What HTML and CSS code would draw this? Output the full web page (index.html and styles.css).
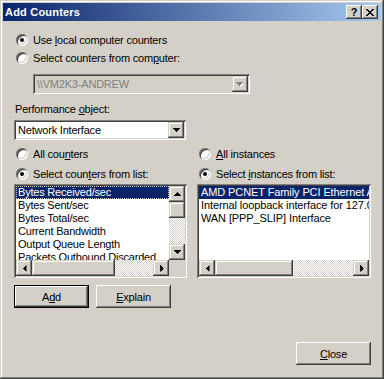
FILE: index.html
```html
<!DOCTYPE html>
<html>
<head>
    <meta charset="UTF-8">
    <title>Add Counters</title>
    <link rel="stylesheet" href="styles.css">
</head>
<body>
<div class="window">
    <div class="titleBar">
        <span class="title">Add Counters</span>
        <div class="capBtns">
            <span class="capBtn">?</span>
            <span class="capBtn"><svg width="8" height="7" viewBox="0 0 8 7" shape-rendering="crispEdges"><path d="M0 0h2v1h-2z M6 0h2v1h-2z M1 1h2v1h-2z M5 1h2v1h-2z M2 2h4v1h-4z M3 3h2v1h-2z M2 4h4v1h-4z M1 5h2v1h-2z M5 5h2v1h-2z M0 6h2v1h-2z M6 6h2v1h-2z" fill="#000"/></svg></span>
        </div>
    </div>

    <div class="content">
        <div class="radioRow"><span class="radio checked"></span><span>Use <u>l</u>ocal computer counters</span></div>
        <div class="radioRow"><span class="radio"></span><span>Select counters from com<u>p</u>uter:</span></div>
        <div class="combo disabled machine">
            <span class="comboText">\\VM2K3-ANDREW</span>
            <span class="dropBtn"><svg width="8" height="5" viewBox="0 0 8 5" shape-rendering="crispEdges"><path d="M1 1h7v1h-1v1h-1v1h-1v1h-1v-1h-1v-1h-1v-1h-1z" fill="#fff"/><path d="M0 0h7v1h-1v1h-1v1h-1v1h-1v-1h-1v-1h-1v-1h-1z" fill="#808080"/></svg></span>
        </div>

        <div class="label">Performance <u>o</u>bject:</div>
        <div class="combo object">
            <span class="comboText">Network Interface</span>
            <span class="dropBtn"><svg width="7" height="4" viewBox="0 0 7 4" shape-rendering="crispEdges"><path d="M0 0h7v1h-1v1h-1v1h-1v1h-1v-1h-1v-1h-1v-1h-1z" fill="#000"/></svg></span>
        </div>

        <div class="cols">
            <div class="col">
                <div class="radioRow"><span class="radio"></span><span>All cou<u>n</u>ters</span></div>
                <div class="radioRow second"><span class="radio checked"></span><span>Select coun<u>t</u>ers from list:</span></div>
                <div class="list">
                    <div class="items">
                        <div class="item sel focus">Bytes Received/sec</div>
                        <div class="item">Bytes Sent/sec</div>
                        <div class="item">Bytes Total/sec</div>
                        <div class="item">Current Bandwidth</div>
                        <div class="item">Output Queue Length</div>
                        <div class="item">Packets Outbound Discarded</div>
                    </div>
                    <div class="vScroll">
                        <span class="sBtn up"><svg width="7" height="4" viewBox="0 0 7 4" shape-rendering="crispEdges"><path d="M0 0h7v1h-1v1h-1v1h-1v1h-1v-1h-1v-1h-1v-1h-1z" fill="#000"/></svg></span>
                        <span class="sBtn thumb"></span>
                        <span class="track"></span>
                        <span class="sBtn"><svg width="7" height="4" viewBox="0 0 7 4" shape-rendering="crispEdges"><path d="M0 0h7v1h-1v1h-1v1h-1v1h-1v-1h-1v-1h-1v-1h-1z" fill="#000"/></svg></span>
                    </div>
                    <div class="hScroll">
                        <span class="sBtn left"><svg width="7" height="4" viewBox="0 0 7 4" shape-rendering="crispEdges"><path d="M0 0h7v1h-1v1h-1v1h-1v1h-1v-1h-1v-1h-1v-1h-1z" fill="#000"/></svg></span>
                        <span class="sBtn hThumb" style="width: 83px"></span>
                        <span class="track"></span>
                        <span class="sBtn right"><svg width="7" height="4" viewBox="0 0 7 4" shape-rendering="crispEdges"><path d="M0 0h7v1h-1v1h-1v1h-1v1h-1v-1h-1v-1h-1v-1h-1z" fill="#000"/></svg></span>
                    </div>
                    <div class="corner"></div>
                </div>
            </div>
            <div class="col">
                <div class="radioRow"><span class="radio"></span><span><u>A</u>ll instances</span></div>
                <div class="radioRow second"><span class="radio checked"></span><span>Select <u>i</u>nstances from list:</span></div>
                <div class="list wide">
                    <div class="items">
                        <div class="item sel">AMD PCNET Family PCI Ethernet Adapter</div>
                        <div class="item">Internal loopback interface for 127.0.0.1</div>
                        <div class="item">WAN [PPP_SLIP] Interface</div>
                    </div>
                    <div class="hScroll">
                        <span class="sBtn left"><svg width="7" height="4" viewBox="0 0 7 4" shape-rendering="crispEdges"><path d="M0 0h7v1h-1v1h-1v1h-1v1h-1v-1h-1v-1h-1v-1h-1z" fill="#000"/></svg></span>
                        <span class="sBtn hThumb" style="width: 78px"></span>
                        <span class="track"></span>
                        <span class="sBtn right"><svg width="7" height="4" viewBox="0 0 7 4" shape-rendering="crispEdges"><path d="M0 0h7v1h-1v1h-1v1h-1v1h-1v-1h-1v-1h-1v-1h-1z" fill="#000"/></svg></span>
                    </div>
                </div>
            </div>
        </div>

        <div class="btnRow">
            <span class="btn default">A<u>d</u>d</span>
            <span class="btn"><u>E</u>xplain</span>
        </div>

        <div class="footer">
            <span class="btn"><u>C</u>lose</span>
        </div>
    </div>
</div>
</body>
</html>
```

FILE: styles.css
```css
* {
    margin: 0;
    padding: 0;
    box-sizing: border-box;
}

body {
    background: #d4d0c8;
    font-family: "Liberation Sans", Arial, sans-serif;
    font-size: 11px;
    color: #000;
}

u {
    text-decoration: underline;
}

/* window frame */
.window {
    width: 384px;
    height: 379px;
    padding: 3px;
    background: #d4d0c8;
    box-shadow: inset -1px -1px #404040, inset 1px 1px #d4d0c8, inset -2px -2px #808080, inset 2px 2px #fff;
}

.titleBar {
    height: 18px;
    display: flex;
    align-items: center;
    justify-content: space-between;
    padding: 0 3px 0 2px;
    background: linear-gradient(to right, #0a246a, #a6caf0);
}

.title {
    color: #fff;
    font-weight: bold;
    letter-spacing: 0.2px;
}

.capBtns {
    display: flex;
}

.capBtn {
    width: 16px;
    height: 14px;
    display: flex;
    align-items: center;
    justify-content: center;
    font-weight: bold;
    font-size: 11px;
    background: #d4d0c8;
    box-shadow: inset -1px -1px #404040, inset 1px 1px #fff, inset -2px -2px #808080, inset 2px 2px #d4d0c8;
}

/* dialog body */
.content {
    padding: 10px 10px 0 11px;
    letter-spacing: -0.2px;
}

.radioRow {
    height: 18px;
    display: flex;
    align-items: center;
    padding-left: 2px;
    white-space: nowrap;
}

.radioRow.second {
    margin-top: 2px;
}

.radio {
    position: relative;
    flex: none;
    width: 12px;
    height: 12px;
    margin-right: 5px;
    border-radius: 50%;
    background: #fff;
    box-shadow: inset 1px 1px #808080, inset -1px -1px #fff, inset 2px 2px #404040, inset -2px -2px #d4d0c8;
}

.radio.checked::after {
    content: "";
    position: absolute;
    left: 4px;
    top: 4px;
    width: 4px;
    height: 4px;
    border-radius: 50%;
    background: #000;
}

.combo {
    height: 20px;
    display: flex;
    align-items: center;
    padding: 2px;
    background: #fff;
    box-shadow: inset 1px 1px #808080, inset -1px -1px #fff, inset 2px 2px #404040, inset -2px -2px #d4d0c8;
}

.combo.disabled {
    background: #d4d0c8;
    color: #808080;
}

.combo.machine {
    width: 217px;
    margin: 7px 0 0 19px;
}

.combo.object {
    width: 172px;
    margin-top: 4px;
}

.comboText {
    flex: 1;
    padding-left: 2px;
    white-space: nowrap;
}

.dropBtn {
    width: 16px;
    height: 16px;
    display: flex;
    align-items: center;
    justify-content: center;
    background: #d4d0c8;
    box-shadow: inset -1px -1px #404040, inset 1px 1px #d4d0c8, inset -2px -2px #808080, inset 2px 2px #fff;
}

.label {
    margin-top: 9px;
    line-height: 13px;
    padding-left: 1px;
}

/* two columns with the lists */
.cols {
    display: grid;
    grid-template-columns: 173px 174px;
    column-gap: 10px;
    margin-top: 5px;
}

.list {
    height: 94px;
    margin-top: 1px;
    padding: 2px;
    display: grid;
    grid-template-columns: 1fr 16px;
    grid-template-rows: 1fr 16px;
    background: #fff;
    box-shadow: inset 1px 1px #808080, inset -1px -1px #fff, inset 2px 2px #404040, inset -2px -2px #d4d0c8;
}

.list.wide {
    grid-template-columns: 1fr;
}

.items {
    overflow: hidden;
    min-width: 0;
}

.item {
    height: 13px;
    line-height: 13px;
    padding-left: 2px;
    white-space: nowrap;
    letter-spacing: -0.2px;
}

.list.wide .item {
    letter-spacing: -0.1px;
}

.item.sel {
    background: #0a246a;
    color: #fff;
}

.item.focus {
    outline: 1px dotted #d4d0c8;
    outline-offset: -1px;
}

.vScroll {
    display: flex;
    flex-direction: column;
}

.hScroll {
    display: flex;
    min-width: 0;
}

.sBtn {
    flex: none;
    width: 16px;
    height: 16px;
    display: flex;
    align-items: center;
    justify-content: center;
    background: #d4d0c8;
    box-shadow: inset -1px -1px #404040, inset 1px 1px #d4d0c8, inset -2px -2px #808080, inset 2px 2px #fff;
}

.sBtn.up svg {
    transform: rotate(180deg);
}

.sBtn.left svg {
    transform: rotate(90deg);
}

.sBtn.right svg {
    transform: rotate(-90deg);
}

.track {
    flex: 1;
    background: repeating-conic-gradient(#d4d0c8 0 25%, #fff 0 50%) 0 0 / 2px 2px;
}

.corner {
    background: #d4d0c8;
}

/* push buttons */
.btnRow {
    display: flex;
    gap: 7px;
    margin-top: 7px;
}

.btn {
    width: 75px;
    height: 23px;
    display: flex;
    align-items: center;
    justify-content: center;
    background: #d4d0c8;
    box-shadow: inset -1px -1px #404040, inset 1px 1px #fff, inset -2px -2px #808080, inset 2px 2px #d4d0c8;
}

.btn.default {
    border: 1px solid #000;
}

.footer {
    display: flex;
    justify-content: flex-end;
    margin-top: 34px;
}
```
